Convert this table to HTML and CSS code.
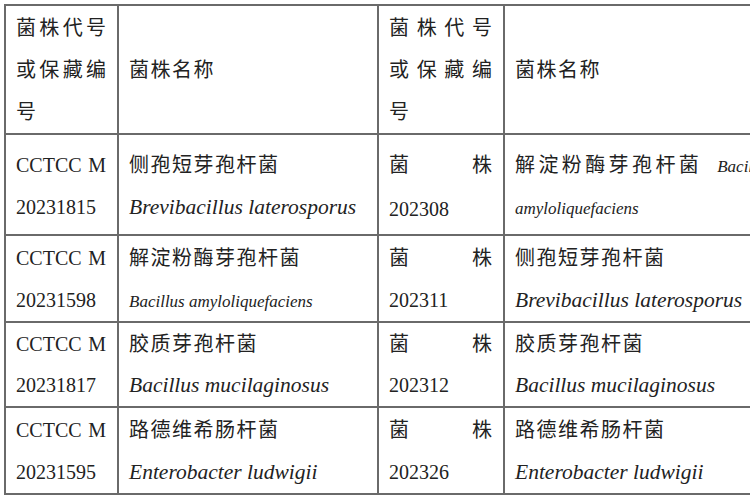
FILE: index.html
```html
<!DOCTYPE html>
<html lang="zh-CN">
<head>
<meta charset="utf-8">
<link rel="stylesheet" href="styles.css">
</head>
<body>
<table class="strains">
  <colgroup>
    <col class="c1"><col class="c2"><col class="c3"><col class="c4">
  </colgroup>
  <tr class="head">
    <td class="just">菌株代号<br>或保藏编<br>号</td>
    <td class="mid"><span class="cn">菌株名称</span></td>
    <td class="just">菌株代号<br>或保藏编<br>号</td>
    <td class="mid"><span class="cn">菌株名称</span></td>
  </tr>
  <tr class="r1">
    <td class="just">CCTCC M<br>20231815</td>
    <td><span class="cn">侧孢短芽孢杆菌</span><br><i class="la">Brevibacillus laterosporus</i></td>
    <td class="just tall">菌株<br>202308</td>
    <td><span class="cn wide">解淀粉酶芽孢杆菌</span> <i class="sm gap">Bacillus</i><br><i class="sm">amyloliquefaciens</i></td>
  </tr>
  <tr class="r2">
    <td class="just">CCTCC M<br>20231598</td>
    <td><span class="cn">解淀粉酶芽孢杆菌</span><br><i class="sm">Bacillus amyloliquefaciens</i></td>
    <td class="just">菌株<br>202311</td>
    <td><span class="cn">侧孢短芽孢杆菌</span><br><i class="la">Brevibacillus laterosporus</i></td>
  </tr>
  <tr class="r3">
    <td class="just">CCTCC M<br>20231817</td>
    <td><span class="cn">胶质芽孢杆菌</span><br><i class="la">Bacillus mucilaginosus</i></td>
    <td class="just">菌株<br>202312</td>
    <td><span class="cn">胶质芽孢杆菌</span><br><i class="la">Bacillus mucilaginosus</i></td>
  </tr>
  <tr class="r4">
    <td class="just">CCTCC M<br>20231595</td>
    <td><span class="cn">路德维希肠杆菌</span><br><i class="la">Enterobacter ludwigii</i></td>
    <td class="just">菌株<br>202326</td>
    <td><span class="cn">路德维希肠杆菌</span><br><i class="la">Enterobacter ludwigii</i></td>
  </tr>
</table>
</body>
</html>
```
FILE: styles.css
```css
html, body {
  margin: 0;
  padding: 0;
  background: #fff;
  overflow: hidden;
  width: 750px;
  height: 500px;
}

.strains {
  border-collapse: collapse;
  table-layout: fixed;
  margin: 4px 0 0 4px;
  width: 779px;
  font-family: "Liberation Serif", "Noto Sans CJK SC", serif;
  font-size: 20px;
  color: #222;
}

.c1 { width: 113px; }
.c2 { width: 260px; }
.c3 { width: 126px; }
.c4 { width: 280px; }

.strains td {
  border: 2px solid #6a6a6a;
  padding: 0 10px;
  vertical-align: top;
  line-height: 42px;
  white-space: nowrap;
  overflow: hidden;
}

.strains td.just {
  text-align: justify;
  text-align-last: justify;
  padding-right: 11px;
}

.strains td.mid {
  vertical-align: middle;
}

.head { height: 129px; }
.r1 { height: 101px; }
.r2 { height: 87px; }
.r3 { height: 85px; }
.r4 { height: 87px; }

.head td {
  line-height: 42px;
  padding-top: 1px;
}

.r1 td {
  padding-top: 9px;
}

.r1 td.tall {
  padding-top: 8px;
  line-height: 44px;
}

.r2 td, .r4 td {
  padding-top: 1px;
}

.r3 td {
  line-height: 41px;
  padding-top: 1px;
}

.cn, .la, .sm {
  line-height: 1;
}

.cn {
  letter-spacing: 1.5px;
}

.cn.wide {
  letter-spacing: 3.4px;
}

.la {
  font-size: 21.5px;
}

.sm {
  font-size: 17px;
}

.gap {
  margin-left: 10px;
}
```
